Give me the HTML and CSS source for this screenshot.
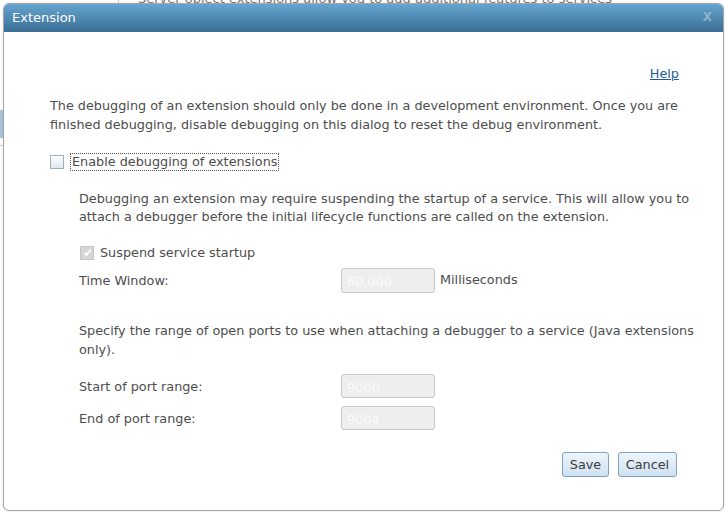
FILE: index.html
```html
<!DOCTYPE html>
<html>
<head>
<meta charset="utf-8">
<link rel="stylesheet" href="styles.css">
</head>
<body>
<div class="page">
  <div class="page-text">Server object extensions allow you to add additional features to services</div>
  <div class="page-divider"></div>
  <div class="page-side"></div>
  <div class="page-side-line"></div>
</div>
<div class="dialog">
  <div class="titlebar">
    <span class="title">Extension</span>
    <span class="close">X</span>
  </div>
  <div class="content">
    <div class="help-row"><a class="help" href="#">Help</a></div>
    <p class="intro">The debugging of an extension should only be done in a development environment. Once you are finished debugging, disable debugging on this dialog to reset the debug environment.</p>
    <div class="check-row">
      <span class="checkbox"></span>
      <span class="check-label focused">Enable debugging of extensions</span>
    </div>
    <div class="indent">
      <p class="note">Debugging an extension may require suspending the startup of a service. This will allow you to attach a debugger before the initial lifecycle functions are called on the extension.</p>
      <div class="check-row sub">
        <span class="checkbox checked">
          <svg width="9" height="9" viewBox="0 0 9 9"><path d="M1.5 4.8 L3.6 7 L7.6 1.8" fill="none" stroke="#fff" stroke-width="1.8"/></svg>
        </span>
        <span class="check-label disabled">Suspend service startup</span>
      </div>
      <div class="field-row first">
        <span class="field-label">Time Window:</span>
        <span class="input">60,000</span>
        <span class="unit">Milliseconds</span>
      </div>
      <p class="note ports">Specify the range of open ports to use when attaching a debugger to a service (Java extensions only).</p>
      <div class="field-row start">
        <span class="field-label">Start of port range:</span>
        <span class="input">9000</span>
      </div>
      <div class="field-row end">
        <span class="field-label">End of port range:</span>
        <span class="input">9004</span>
      </div>
    </div>
    <div class="buttons">
      <button class="btn save">Save</button>
      <button class="btn cancel">Cancel</button>
    </div>
  </div>
</div>
</body>
</html>
```

FILE: styles.css
```css
* { box-sizing: border-box; }
html, body {
  margin: 0;
  padding: 0;
  width: 725px;
  height: 512px;
  overflow: hidden;
  background: #ffffff;
  font-family: "DejaVu Sans", Verdana, sans-serif;
  font-size: 12.8px;
  color: #4d4d4d;
}
.page { position: relative; width: 725px; height: 512px; overflow: hidden; }
.page-text {
  position: absolute;
  left: 138px;
  top: -9px;
  font-size: 13px;
  color: #777;
  white-space: nowrap;
}
.page-divider {
  position: absolute;
  left: 118px;
  top: 0;
  width: 1px;
  height: 6px;
  background: #cfcfcf;
}
.page-side {
  position: absolute;
  left: 0;
  top: 110px;
  width: 3px;
  height: 28px;
  background: #a9c4d8;
}
.page-side-line {
  position: absolute;
  left: 0;
  top: 145px;
  width: 3px;
  height: 1px;
  background: #cccccc;
}
.dialog {
  position: absolute;
  left: 3px;
  top: 3px;
  width: 721px;
  height: 508px;
  background: #fff;
  border: 1px solid #a6a6a6;
  border-radius: 6px;
  overflow: hidden;
  display: flex;
  flex-direction: column;
  box-shadow: 0 0 2px rgba(0,0,0,0.15);
}
.titlebar {
  height: 28px;
  flex: none;
  background: linear-gradient(#64a5cf, #3a6d94);
  display: flex;
  align-items: center;
  justify-content: space-between;
  padding: 0 9px 2px 8px;
}
.title {
  color: #fff;
  font-size: 13px;
}
.close {
  color: #8fb3cc;
  font-size: 12px;
  font-weight: bold;
  margin-right: 2px;
}
.content {
  padding: 32px 44px 0 46px;
  display: flex;
  flex-direction: column;
}
.help-row {
  display: flex;
  justify-content: flex-end;
  line-height: 19px;
}
.help {
  color: #1d5e96;
  text-decoration: underline;
}
p { margin: 0; }
.intro {
  margin-top: 13px;
  line-height: 19px;
  width: 630px;
}
.check-row {
  display: flex;
  align-items: center;
  gap: 7px;
  margin-top: 18px;
  height: 19px;
}
.checkbox {
  width: 14px;
  height: 14px;
  border: 1px solid #a3adbd;
  background: linear-gradient(#fff, #dde6f0);
  display: flex;
  align-items: center;
  justify-content: center;
}
.checkbox.checked {
  border: 1px solid #c6c6c6;
  background: #d6d6d6;
}
.check-label.focused {
  outline: 1px dotted #555;
  outline-offset: 0;
  padding: 0 1px;
  line-height: 16px;
}
.indent {
  padding-left: 29px;
  display: flex;
  flex-direction: column;
}
.note {
  margin-top: 19px;
  line-height: 18px;
  width: 615px;
}
.check-row.sub {
  margin-top: 17px;
  padding-left: 1px;
  gap: 6px;
}
.field-row {
  display: flex;
  align-items: center;
  height: 25px;
}
.field-row.first { margin-top: 6px; }
.field-row.start { margin-top: 15px; height: 24px; }
.field-row.end { margin-top: 8px; height: 24px; }
.field-label {
  width: 262px;
  flex: none;
}
.input {
  width: 94px;
  height: 100%;
  border: 1px solid #c8c8c8;
  border-radius: 3px;
  background: #eeeeee;
  color: #fbfbfb;
  display: flex;
  align-items: center;
  padding-left: 5px;
  padding-top: 2px;
}
.unit {
  margin-left: 5px;
  padding-bottom: 2px;
}
.note.ports {
  margin-top: 28px;
  line-height: 19px;
}
.buttons {
  margin-top: 22px;
  display: flex;
  justify-content: flex-end;
  gap: 9px;
  padding-right: 2px;
}
.btn {
  font-family: "DejaVu Sans", Verdana, sans-serif;
  font-size: 12.8px;
  color: #3a3a3a;
  height: 25px;
  border: 1px solid #7fa3c4;
  border-radius: 3px;
  background: linear-gradient(#eef5fb, #cfe1f1);
  padding: 0 4px;
  margin: 0;
}
.btn.save { width: 47px; }
.btn.cancel { width: 59px; }
```
